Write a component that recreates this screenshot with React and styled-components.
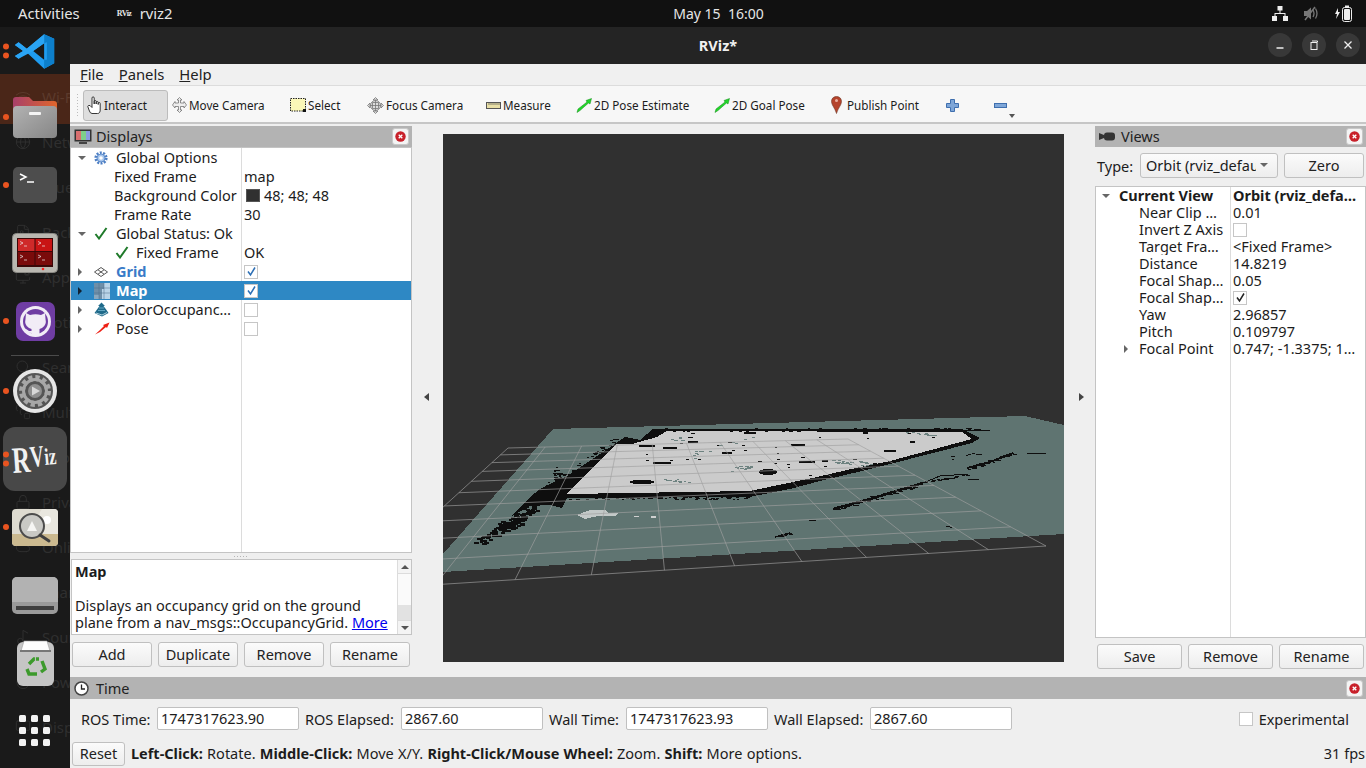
import React from "react";
import styled, { createGlobalStyle } from "styled-components";
import {
  Wifi, Globe, Bluetooth, FileImage, MonitorCog, Bell, Search, SquareStack, LayoutGrid,
  Lock, Cloud, Share2, Music2, Power, Monitor,
} from "lucide-react";

const UI_FONT = '"Noto Sans", "Liberation Sans", sans-serif';

const Global = createGlobalStyle`
  html, body { margin: 0; padding: 0; height: 768px; overflow: hidden; background: #efefef; }
  #root { height: 768px; }
  * { box-sizing: border-box; }
  body { font-family: ${UI_FONT}; font-size: 14.5px; color: #1c1c1c; }
`;

const Screen = styled.div`
  width: 1366px;
  height: 768px;
  display: flex;
  flex-direction: column;
  overflow: hidden;
`;

/* ---------- gnome top bar ---------- */
const TopBar = styled.div`
  height: 27px;
  flex: none;
  background: #111;
  color: #e6e6e6;
  display: grid;
  grid-template-columns: 1fr auto 1fr;
  align-items: center;
  padding: 0 13px 1px 18px;
  font-size: 14.8px;
`;
const TopLeft = styled.div`
  display: flex;
  align-items: center;
`;
const AppName = styled.div`
  display: flex;
  align-items: center;
  margin-left: 37px;
  gap: 8px;
`;
const TinyLogo = styled.span`
  font: bold 8px "Liberation Serif", serif;
  width: 15px;
  letter-spacing: -0.5px;
`;
const Clock = styled.div`
  font-size: 14px;
  margin-left: 66px;
`;
const TopRight = styled.div`
  display: flex;
  justify-content: flex-end;
  align-items: center;
  gap: 15px;
`;

const Body = styled.div`
  flex: 1;
  display: flex;
  min-height: 0;
`;

/* ---------- dock ---------- */
const Dock = styled.div`
  width: 70px;
  flex: none;
  background: #1a1a1a;
  position: relative;
  overflow: hidden;
  display: flex;
  flex-direction: column;
`;
const GhostList = styled.div`
  position: absolute;
  left: 0;
  top: 47px;
  width: 70px;
`;
const GhostRow = styled.div`
  height: ${(p) => (p.$active ? 50 : 45)}px;
  margin-bottom: ${(p) => (p.$active ? -5 : 0)}px;
  padding-bottom: ${(p) => (p.$active ? 5 : 0)}px;
  width: 70px;
  display: flex;
  align-items: center;
  gap: 11px;
  padding-left: 15px;
  white-space: nowrap;
  color: ${(p) => (p.$active ? "#5c3a2c" : "#2f2f2f")};
  background: ${(p) => (p.$active ? "#4a2618" : "transparent")};
  font-size: 15px;
  svg { flex: none; }
`;
const DockSlot = styled.div`
  position: relative;
  height: ${(p) => p.$h || 68}px;
  margin-bottom: ${(p) => p.$mb || 0}px;
  flex: none;
  display: flex;
  align-items: center;
  justify-content: center;
`;
const Highlight = styled.div`
  width: 64px;
  height: 64px;
  border-radius: 12px;
  background: #484848;
  display: flex;
  align-items: center;
  justify-content: center;
`;
const DockSep = styled.div`
  position: relative;
  height: 2px;
  flex: none;
  margin: 0 11px;
  border-top: 1px solid #4b4b4b;
`;
const Pips = styled.div`
  position: absolute;
  left: 3px;
  top: 50%;
  transform: translateY(-50%);
  display: flex;
  flex-direction: column;
  gap: 3px;
`;
const Pip = styled.span`
  width: 6px;
  height: 6px;
  border-radius: 50%;
  background: #e95420;
`;

const VsCodeIcon = () => (
  <svg width="42" height="37" viewBox="0 0 46 40">
    <path d="M33 1 L44 6 V33 L33 39 L14 21 L5 28 L1 25 L10 19.500 L1 13 L5 10 L14 17 Z M33 11 L21 19.500 L33 29 Z" fill="#1f9cf0" fillRule="evenodd" />
    <path d="M33 1 L44 6 V33 L33 39 Z M33 11 V29 L36 29 V10 Z" fill="#0d7fcb" fillRule="evenodd" />
    <path d="M5 10 L14 17 L33 1 V11 L21 19.500 L5 28 L1 25 L10 19.500 L1 13 Z" fill="#2aa4f4" />
  </svg>
);
const FilesIcon = () => (
  <svg width="44" height="41" viewBox="0 0 44 41">
    <defs>
      <linearGradient id="folderTop" x1="0" x2="1" y1="0" y2="0">
        <stop offset="0" stopColor="#a8406a" />
        <stop offset="1" stopColor="#e0662c" />
      </linearGradient>
      <linearGradient id="folderBody" x1="0" x2="1" y1="0" y2="1">
        <stop offset="0" stopColor="#b2b2b2" />
        <stop offset="1" stopColor="#868686" />
      </linearGradient>
    </defs>
    <path d="M0 3 a3 3 0 0 1 3-3 h13 l4 4 h21 a3 3 0 0 1 3 3 v10 H0 Z" fill="url(#folderTop)" />
    <rect y="9" width="44" height="32" rx="4" fill="url(#folderBody)" />
    <rect x="16" y="15" width="12" height="3" rx="1" fill="#f4f4f4" />
  </svg>
);
const TerminalIcon = () => (
  <svg width="44" height="36" viewBox="0 0 44 36">
    <rect width="44" height="36" rx="5" fill="#4d4d4d" />
    <path d="M7 7 L13 10 L7 13" fill="none" stroke="#fff" strokeWidth="1.500" />
    <path d="M14 15 H21" stroke="#fff" strokeWidth="1.500" />
  </svg>
);
const WorkspaceIcon = () => (
  <svg width="46" height="40" viewBox="0 0 46 40">
    <rect x="0.500" y="0.500" width="45" height="39" rx="4" fill="#b9b7b0" stroke="#8b8a85" />
    <rect x="5" y="5" width="36" height="29" fill="#3a0808" />
    <rect x="6" y="6" width="16.500" height="12" fill="#cf2a2a" />
    <rect x="23.500" y="6" width="16.500" height="12" fill="#c81414" />
    <rect x="6" y="19" width="16.500" height="13" fill="#7a0b0b" />
    <rect x="23.500" y="19" width="16.500" height="13" fill="#7a0b0b" />
    <path d="M8 8.500 l3 1.500 l-3 1.500 M12 13 h3 M26 8.500 l3 1.500 l-3 1.500 M30 13 h3 M8 22 l3 1.500 l-3 1.500 M12 27 h3 M26 22 l3 1.500 l-3 1.500 M30 27 h3" stroke="#eee" strokeWidth="0.700" fill="none" />
    <circle cx="31" cy="36" r="1.300" fill="#f22" />
  </svg>
);
const GithubIcon = () => (
  <svg width="39" height="39" viewBox="0 0 39 39">
    <rect width="39" height="39" rx="7" fill="#6f3da3" />
    <circle cx="19.500" cy="19.500" r="15.500" fill="#f1ecf6" />
    <circle cx="19.500" cy="19.500" r="12.500" fill="#6f3da3" />
    <path d="M10 11 L14 13 Q19.500 11.500 25 13 L29 11 L29.500 17 Q31 23 26 26 L23.500 27 V34 H15.500 V31 Q10.500 31 8.500 26.500 Q11 27 13 29 L15.500 29 V27 L13 26 Q8 23 9.500 17 Z" fill="#f1ecf6" />
  </svg>
);
const SettingsIcon = () => (
  <svg width="44" height="44" viewBox="0 0 44 44">
    <circle cx="22" cy="22" r="22" fill="#e6e6e6" />
    <circle cx="22" cy="22" r="18" fill="#555" />
    <circle cx="22" cy="22" r="13" fill="none" stroke="#a7a7a7" strokeWidth="6" strokeDasharray="4 2.800" />
    <circle cx="22" cy="22" r="11.500" fill="none" stroke="#a7a7a7" strokeWidth="3" />
    <circle cx="22" cy="22" r="7" fill="#8f8f8f" />
    <path d="M19 17.500 L27 22 L19 26.500 Z" fill="#d8d8d8" />
  </svg>
);
const RvizIcon = () => (
  <svg width="58" height="48" viewBox="0 0 58 48" fontFamily="Liberation Serif, serif" fontWeight="bold" fill="#f2f2f2">
    <text x="7" y="38" fontSize="37" textLength="18" lengthAdjust="spacingAndGlyphs" transform="rotate(-4 7 38)">R</text>
    <text x="25" y="32" fontSize="30" textLength="14" lengthAdjust="spacingAndGlyphs" transform="rotate(-6 25 32)">V</text>
    <text x="39" y="30" fontSize="24" textLength="12" lengthAdjust="spacingAndGlyphs" transform="rotate(-5 39 30)">iz</text>
  </svg>
);
const MagnifierIcon = () => (
  <svg width="46" height="37" viewBox="0 0 46 37">
    <rect width="46" height="37" rx="4" fill="#dedbd0" />
    <path d="M0 33 Q0 37 4 37 H42 Q46 37 46 33 V25 H0 Z" fill="#cbb98f" />
    <path d="M0 25 L14 25 L30 0 H42 Q46 0 46 4 V25 Z" fill="#e9e7df" />
    <circle cx="35" cy="11" r="4" fill="#fff" />
    <circle cx="20" cy="17" r="12" fill="#c9c9c5" stroke="#4c4c4c" strokeWidth="2" />
    <path d="M15 22 L20 12 L25 22 Z" fill="#f5f5f3" />
    <path d="M28 26 L37 32" stroke="#3f3f3f" strokeWidth="3" strokeLinecap="round" />
  </svg>
);
const DiskIcon = () => (
  <svg width="46" height="37" viewBox="0 0 46 37">
    <rect width="46" height="37" rx="5" fill="#9a9a9a" />
    <path d="M0 5 a5 5 0 0 1 5-5 h36 a5 5 0 0 1 5 5 v20 H0 Z" fill="#b2b2b2" />
    <rect x="4" y="29" width="38" height="4" fill="#3f3f3f" />
  </svg>
);
const TrashIcon = () => (
  <svg width="37" height="46" viewBox="0 0 37 46">
    <rect y="2" width="37" height="44" rx="6" fill="#c5c5c5" />
    <path d="M4 11 L7 1 H30 L33 11 Z" fill="#fdfdfd" stroke="#9a9a9a" strokeWidth="0.600" />
    <rect x="3" y="10" width="31" height="2" fill="#777" />
    <g fill="none" stroke="#3c9a2c" strokeWidth="3.400">
      <path d="M12 24 L17 19 L22 19" strokeDasharray="8 1" />
      <path d="M25 21 L28 29 L24 32" />
      <path d="M20 34 H12 L10 29" />
    </g>
  </svg>
);
const AppGridIcon = () => (
  <svg width="32" height="32" viewBox="0 0 32 32" fill="#f2f2f2">
    {[0, 1, 2].flatMap((r) =>
      [0, 1, 2].map((c) => <rect key={`${r}${c}`} x={c * 12} y={r * 12} width="7" height="7" rx="1.500" />)
    )}
  </svg>
);

const ghosts = [
  ["Wi-Fi", Wifi], ["Network", Globe], ["Bluetooth", Bluetooth], ["Background", FileImage],
  ["Appearance", MonitorCog], ["Notifications", Bell], ["Search", Search], ["Multitasking", SquareStack],
  ["Applications", LayoutGrid], ["Privacy", Lock], ["Online Accounts", Cloud], ["Sharing", Share2],
  ["Sound", Music2], ["Power", Power], ["Displays", Monitor],
];

function Running({ n = 1 }) {
  return (
    <Pips>
      {Array.from({ length: n }, (_, i) => <Pip key={i} />)}
    </Pips>
  );
}

function Launcher() {
  return (
    <Dock>
      <GhostList>
        {ghosts.map(([name, Icon], i) => (
          <GhostRow key={name} $active={i === 0}>
            <Icon size={16} strokeWidth={1.500} />
            {name}
          </GhostRow>
        ))}
      </GhostList>
      <DockSlot $h={48} $mb={8}><Running n={2} /><VsCodeIcon /></DockSlot>
      <DockSlot><Running /><FilesIcon /></DockSlot>
      <DockSlot><Running /><TerminalIcon /></DockSlot>
      <DockSlot><WorkspaceIcon /></DockSlot>
      <DockSlot><Running /><GithubIcon /></DockSlot>
      <DockSep />
      <DockSlot><Running /><SettingsIcon /></DockSlot>
      <DockSlot><Highlight><RvizIcon /></Highlight><Running n={2} /></DockSlot>
      <DockSlot><Running /><MagnifierIcon /></DockSlot>
      <DockSlot><DiskIcon /></DockSlot>
      <DockSlot><TrashIcon /></DockSlot>
      <DockSlot><AppGridIcon /></DockSlot>
    </Dock>
  );
}

/* ---------- window chrome ---------- */
const Win = styled.div`
  flex: 1;
  min-width: 0;
  display: flex;
  flex-direction: column;
  background: #efefef;
`;
const TitleBar = styled.div`
  height: 37px;
  flex: none;
  background: #242424;
  color: #f0f0f0;
  font-weight: 700;
  font-size: 14.5px;
  display: flex;
  align-items: center;
  justify-content: center;
  padding-bottom: 2px;
  position: relative;
`;
const WinButtons = styled.div`
  position: absolute;
  right: 6px;
  top: 6px;
  display: flex;
  gap: 10px;
`;
const WinButton = styled.div`
  width: 24px;
  height: 24px;
  border-radius: 50%;
  background: #383838;
  display: flex;
  align-items: center;
  justify-content: center;
`;
const MenuBar = styled.div`
  height: 22px;
  flex: none;
  background: #f0f0f0;
  border-bottom: 1px solid #dcdcdc;
  display: flex;
  align-items: center;
  padding: 0 0 1px 10px;
  gap: 15px;
  font-size: 14.8px;
  span { color: #222; }
`;
const ToolBar = styled.div`
  height: 38px;
  flex: none;
  background: #f7f7f7;
  border-bottom: 2px solid #c6c6c6;
  display: flex;
  align-items: center;
  padding-top: 2px;
  position: relative;
  font-size: 11.7px;
`;
const Grip = styled.div`
  width: 3px;
  height: 24px;
  margin: 0 4px 0 6px;
  background-image: radial-gradient(#bdbdbd 0.700px, transparent 0.800px);
  background-size: 3px 3px;
`;
const Tool = styled.div`
  width: ${(p) => p.$w}px;
  height: 31px;
  flex: none;
  display: flex;
  align-items: center;
  gap: ${(p) => p.$gap ?? 2}px;
  padding-left: 3px;
  white-space: nowrap;
  border-radius: 3px;
  border: 1px solid ${(p) => (p.$on ? "#bcbcbc" : "transparent")};
  background: ${(p) => (p.$on ? "#dedede" : "transparent")};
  svg { flex: none; }
`;
const MoreArrow = styled.span`
  position: absolute;
  left: 939px;
  top: 28px;
  border-left: 3px solid transparent;
  border-right: 3px solid transparent;
  border-top: 4px solid #555;
`;

const HandIcon = () => (
  <svg width="16" height="19" viewBox="0 0 16 19" fill="#fff" stroke="#222" strokeWidth="0.900">
    <path d="M5 9 V2 a1.100 1.100 0 0 1 2.200 0 V8 V5.500 a1 1 0 0 1 2 0 V8 V6.500 a1 1 0 0 1 2 0 V8.500 V7.500 a1 1 0 0 1 2 0 V13 Q13.500 17.500 10.500 17.500 H5 Q3 17.500 2 14 L0.800 10.500 Q1 9 3 9.500 L5 11.500 Z" />
  </svg>
);
const MoveIcon = () => (
  <svg width="15" height="16" viewBox="0 0 15 16" fill="#eee" stroke="#666" strokeWidth="0.700">
    <path d="M7.500 0.500 L10 3 H8.500 V6 H12 V4.500 L14.500 8 L12 11 V9.500 H8.500 V13 H10 L7.500 15.500 L5 13 H6.500 V9.500 H3 V11 L0.500 8 L3 4.500 V6 H6.500 V3 H5 Z" />
  </svg>
);
const SelectIcon = () => (
  <svg width="16" height="14" viewBox="0 0 16 14">
    <rect x="0.500" y="0.500" width="15" height="12.500" fill="#fbf7b8" stroke="#222" strokeDasharray="1.500 1" />
    <rect x="13" y="11" width="3" height="3" fill="#111" />
  </svg>
);
const FocusIcon = () => (
  <svg width="17" height="17" viewBox="0 0 17 17" fill="none" stroke="#777" strokeWidth="0.800">
    <path d="M8.500 0.500 L11 3 H6 Z M8.500 16.500 L11 14 H6 Z M0.500 8.500 L3 6 V11 Z M16.500 8.500 L14 6 V11 Z" fill="#ddd" />
    <circle cx="8.500" cy="8.500" r="5" fill="#ddd" />
    <path d="M8.500 3 V14 M3 8.500 H14 M5.500 5.500 H11.500 V11.500 H5.500 Z" />
  </svg>
);
const RulerIcon = () => (
  <svg width="15" height="7" viewBox="0 0 15 7">
    <rect x="0.500" y="0.500" width="14" height="6" fill="#e8dfa6" stroke="#555" />
    <path d="M3 1 V3 M5 1 V3 M7 1 V3 M9 1 V3 M11 1 V3 M13 1 V3" stroke="#555" strokeWidth="0.700" />
  </svg>
);
const GreenArrow = () => (
  <svg width="16" height="15" viewBox="0 0 16 15">
    <path d="M1 14.500 L2 11 L11 4 L10 2.500 L15.500 0.500 L14 6 L12.500 5 L4 12.500 Z" fill="#22d62a" stroke="#128a18" strokeWidth="0.500" />
  </svg>
);
const PinIcon = () => (
  <svg width="11" height="18" viewBox="0 0 11 18">
    <path d="M5.500 0.500 C2 0.500 0.500 3 0.500 5.500 C0.500 9 4 12 5.500 17.500 C7 12 10.500 9 10.500 5.500 C10.500 3 9 0.500 5.500 0.500 Z" fill="#b5432c" stroke="#6e3a28" strokeWidth="0.600" />
    <circle cx="5.500" cy="4.500" r="1.500" fill="#e9b0a0" />
  </svg>
);
const PlusIcon = () => (
  <svg width="13" height="13" viewBox="0 0 13 13">
    <path d="M4.500 0.500 H8.500 V4.500 H12.500 V8.500 H8.500 V12.500 H4.500 V8.500 H0.500 V4.500 H4.500 Z" fill="#7ea6d8" stroke="#3f6fae" />
  </svg>
);
const MinusIcon = () => (
  <svg width="13" height="5" viewBox="0 0 13 5">
    <rect x="0.500" y="0.500" width="12" height="4" fill="#7ea6d8" stroke="#3f6fae" />
  </svg>
);

/* ---------- panels ---------- */
const MainRow = styled.div`
  height: 553px;
  flex: none;
  display: flex;
`;
const Side = styled.div`
  width: ${(p) => p.$w}px;
  flex: none;
  display: flex;
  flex-direction: column;
  padding-top: 2px;
`;
const PanelHead = styled.div`
  height: ${(p) => p.$h || 22}px;
  flex: none;
  background: #b3b3b3;
  display: flex;
  align-items: center;
  gap: ${(p) => p.$gap || 5}px;
  padding: 0 3px 0 ${(p) => p.$pl || 3}px;
  font-size: 14.5px;
  color: #222;
`;
const PanelTitle = styled.span`
  margin-top: -2px;
`;
const HeadClose = styled.div`
  margin-left: auto;
  width: 17px;
  height: 17px;
  border-radius: 3px;
  background: #f4f4f4;
  border: 1px solid #c8c8c8;
  display: flex;
  align-items: center;
  justify-content: center;
`;
const CloseDot = () => (
  <HeadClose>
    <svg width="11" height="11" viewBox="0 0 11 11">
      <circle cx="5.500" cy="5.500" r="5.200" fill="#c8202a" />
      <path d="M3.700 3.700 L7.300 7.300 M7.300 3.700 L3.700 7.300" stroke="#fff" strokeWidth="1.300" />
    </svg>
  </HeadClose>
);
const TreeBox = styled.div`
  flex: none;
  height: ${(p) => p.$h}px;
  background: #fff;
  border: 1px solid #c4c4c4;
  background-image: linear-gradient(#dcdcdc, #dcdcdc);
  background-size: 1px 100%;
  background-position: ${(p) => p.$split}px 0;
  background-repeat: no-repeat;
  overflow: hidden;
`;
const Row = styled.div`
  height: ${(p) => p.$h}px;
  display: grid;
  grid-template-columns: ${(p) => p.$split}px 1fr;
  align-items: center;
  white-space: nowrap;
  background: ${(p) => (p.$sel ? "#2e88c4" : "transparent")};
  color: ${(p) => (p.$sel ? "#fff" : "#1c1c1c")};
  font-size: 14.5px;
  line-height: ${(p) => p.$h}px;
`;
const NameCell = styled.div`
  display: flex;
  align-items: center;
  padding-left: ${(p) => p.$pl}px;
  overflow: hidden;
  font-weight: ${(p) => (p.$bold ? 700 : 400)};
  color: ${(p) => p.$color || "inherit"};
`;
const ValueCell = styled.div`
  padding-left: 3px;
  display: flex;
  align-items: center;
  gap: 4px;
  overflow: hidden;
  font-weight: ${(p) => (p.$bold ? 700 : 400)};
`;
const Arrow = styled.span`
  width: 0;
  height: 0;
  flex: none;
  ${(p) =>
    p.$open
      ? `border-left: 4px solid transparent; border-right: 4px solid transparent; border-top: 4px solid #666;`
      : `border-top: 4px solid transparent; border-bottom: 4px solid transparent; border-left: 4px solid ${p.$sel ? "#123" : "#666"};`}
`;
const ArrowSlot = styled.span`
  width: ${(p) => p.$w}px;
  flex: none;
  display: flex;
`;
const IconSlot = styled.span`
  width: ${(p) => p.$w}px;
  flex: none;
  display: flex;
  align-items: center;
`;
const Box = styled.span`
  width: 14px;
  height: 14px;
  flex: none;
  background: #fff;
  border: 1px solid #c6c6c6;
  display: flex;
  align-items: center;
  justify-content: center;
`;
const Swatch = styled.span`
  width: 14px;
  height: 13px;
  margin-left: 2px;
  background: #303030;
  border: 1px solid #555;
`;
const Check = ({ on, color = "#2d6fb5" }) => (
  <Box>
    {on && (
      <svg width="11" height="11" viewBox="0 0 11 11">
        <path d="M2 5.500 L4.500 9 L9 1.500" fill="none" stroke={color} strokeWidth="1.500" />
      </svg>
    )}
  </Box>
);

const GearIcon = () => (
  <svg width="14" height="14" viewBox="0 0 14 14">
    <circle cx="7" cy="7" r="5.300" fill="none" stroke="#4d7fc4" strokeWidth="2.600" strokeDasharray="2 1.300" />
    <circle cx="7" cy="7" r="4" fill="#a8c6ec" stroke="#4d7fc4" strokeWidth="0.800" />
    <circle cx="7" cy="7" r="1.800" fill="#fff" />
  </svg>
);
const TickIcon = () => (
  <svg width="14" height="13" viewBox="0 0 14 13">
    <path d="M1.500 7 L5 11.500 L12.500 1" fill="none" stroke="#1f7a2a" strokeWidth="2" />
  </svg>
);
const GridIcon = () => (
  <svg width="14" height="10" viewBox="0 0 14 10" fill="none" stroke="#444">
    <path d="M7 0.500 L13.500 5 L7 9.500 L0.500 5 Z M4 2.800 L10 7.200 M10 2.800 L4 7.200" strokeWidth="0.900" />
  </svg>
);
const MapIcon = () => (
  <svg width="16" height="16" viewBox="0 0 16 16">
    <rect width="16" height="16" fill="#6f8fa8" />
    <path d="M8 16 V6 H10 V0 H16 V16 Z" fill="#b9d4e8" />
    <path d="M0 12 H5 V16 H0 Z" fill="#8aa8be" />
    <path d="M5 0 V16 M10 0 V16 M0 5 H16 M0 10 H16" stroke="#4f6f88" strokeWidth="0.500" />
  </svg>
);
const ColorMapIcon = () => (
  <svg width="15" height="15" viewBox="0 0 15 15">
    <path d="M7.500 0.500 L11 4 L9.500 4 L12.500 8 L14.500 11 L8 14.500 L0.500 11 L3 7.500 L5.500 4 L4 4 Z" fill="#1f6a8a" />
    <path d="M2 11 L8 13 L13 10.500" fill="none" stroke="#cfe6ef" strokeWidth="0.800" />
    <path d="M5 6 L10 6 M4 8.500 L11 8.500" stroke="#7fc0d8" strokeWidth="0.700" />
  </svg>
);
const PoseIcon = () => (
  <svg width="16" height="13" viewBox="0 0 16 13">
    <path d="M1 12.500 L6 8 L10 4 L9 3 L15.500 0.500 L13 6 L12 5 L6 10 Z" fill="#ee2015" />
  </svg>
);
const DisplayHeadIcon = () => (
  <svg width="18" height="16" viewBox="0 0 18 16">
    <rect x="0.500" y="0.500" width="17" height="12" fill="#333" />
    <rect x="2" y="2" width="5" height="9" fill="#d96f6f" />
    <rect x="7" y="2" width="5" height="9" fill="#7fce8a" />
    <rect x="12" y="2" width="4" height="9" fill="#8a9ae0" />
    <rect x="5" y="13" width="8" height="2" fill="#444" />
  </svg>
);
const CameraHeadIcon = () => (
  <svg width="16" height="9" viewBox="0 0 16 9">
    <path d="M0 1 L5 3 V6 L0 8 Z" fill="#333" />
    <rect x="5" y="0.500" width="11" height="8" rx="3" fill="#333" />
  </svg>
);
const ClockHeadIcon = () => (
  <svg width="15" height="15" viewBox="0 0 15 15">
    <circle cx="7.500" cy="7.500" r="6.500" fill="#fff" stroke="#444" strokeWidth="1.500" />
    <path d="M7.500 3.500 V8 H11" fill="none" stroke="#222" strokeWidth="1.300" />
  </svg>
);

const SplitGrip = styled.div`
  height: ${(p) => p.$h}px;
  flex: none;
  display: flex;
  justify-content: center;
  align-items: center;
  &::after {
    content: "";
    width: 16px;
    height: 3px;
    background-image: radial-gradient(#b5b5b5 0.700px, transparent 0.800px);
    background-size: 3px 3px;
  }
`;
const DescBox = styled.div`
  height: 76px;
  flex: none;
  margin-left: 1px;
  display: flex;
  background: #fff;
  border: 1px solid #c4c4c4;
  overflow: hidden;
`;
const DescText = styled.div`
  flex: 1;
  padding: 3px 0 0 3px;
  font-size: 14.5px;
  line-height: 17px;
  color: #1c1c1c;
  b { display: block; margin-bottom: 17px; }
  a { color: #0000ee; text-decoration: underline; }
`;
const ScrollBar = styled.div`
  width: 14px;
  flex: none;
  border-left: 1px solid #dcdcdc;
  background: #fafafa;
  display: flex;
  flex-direction: column;
  align-items: center;
  justify-content: space-between;
`;
const ScrollEnd = styled.div`
  width: 100%;
  height: 14px;
  display: flex;
  align-items: center;
  justify-content: center;
  background: #f4f4f4;
  border-${(p) => (p.$up ? "bottom" : "top")}: 1px solid #dcdcdc;
  &::after {
    content: "";
    border-left: 4px solid transparent;
    border-right: 4px solid transparent;
    border-${(p) => (p.$up ? "bottom" : "top")}: 4px solid #555;
  }
`;
const ScrollThumb = styled.div`
  width: 100%;
  height: 15px;
  margin-top: auto;
  background: #e2e2e2;
`;
const ButtonRow = styled.div`
  display: grid;
  grid-template-columns: repeat(${(p) => p.$n}, 1fr);
  gap: 6px;
  padding: 0 2px;
  margin-top: ${(p) => p.$mt}px;
`;
const PushButton = styled.div`
  height: ${(p) => p.$h || 25}px;
  width: ${(p) => (p.$w ? `${p.$w}px` : "auto")};
  margin-left: ${(p) => p.$ml || 0}px;
  flex: none;
  display: flex;
  align-items: center;
  justify-content: center;
  padding-bottom: 2px;
  background: linear-gradient(#fbfbfb, #ededed);
  border: 1px solid #c0c0c0;
  border-radius: 3px;
  font-size: 14.5px;
  color: #222;
`;

const Center = styled.div`
  flex: 1;
  display: flex;
  min-width: 0;
`;
const Gutter = styled.div`
  width: 31px;
  flex: none;
  display: flex;
  align-items: center;
  justify-content: ${(p) => (p.$left ? "flex-start" : "flex-end")};
  padding: 0 ${(p) => (p.$left ? 0 : 11)}px 7px ${(p) => (p.$left ? 12 : 0)}px;
  &::after {
    content: "";
    ${(p) =>
      p.$left
        ? "border-top: 4px solid transparent; border-bottom: 4px solid transparent; border-right: 5px solid #444;"
        : "border-top: 4px solid transparent; border-bottom: 4px solid transparent; border-left: 5px solid #444;"}
  }
`;
const Viewport = styled.div`
  width: 621px;
  height: 528px;
  margin-top: 10px;
  flex: none;
  background: #303030;
  svg { display: block; }
`;
const TypeRow = styled.div`
  display: flex;
  align-items: center;
  height: 25px;
  margin: 6px 0 8px;
  padding: 0 2px;
  font-size: 14.5px;
`;
const TypeLabel = styled.span`
  width: 43px;
  flex: none;
`;
const Combo = styled.div`
  width: 138px;
  height: 25px;
  flex: none;
  display: flex;
  align-items: center;
  padding: 0 0 2px 5px;
  gap: 4px;
  background: linear-gradient(#fbfbfb, #ededed);
  border: 1px solid #c0c0c0;
  border-radius: 3px;
  overflow: hidden;
  white-space: nowrap;
`;
const ComboText = styled.span`
  width: 110px;
  overflow: hidden;
  flex: none;
`;
const ComboArrow = styled.span`
  border-left: 4px solid transparent;
  border-right: 4px solid transparent;
  border-top: 4px solid #666;
`;

/* ---------- time panel ---------- */
const TimePanel = styled.div`
  flex: 1;
  display: flex;
  flex-direction: column;
  font-size: 14.5px;
`;
const TimeFields = styled.div`
  display: flex;
  align-items: center;
  height: 23px;
  margin-top: 8px;
  padding: 0 17px 0 11px;
`;
const TimeLabel = styled.span`
  width: ${(p) => p.$w}px;
  flex: none;
  white-space: nowrap;
`;
const TimeInput = styled.div`
  width: 142px;
  height: 23px;
  flex: none;
  margin-right: 6px;
  background: #fff;
  border: 1px solid #c0c0c0;
  border-radius: 2px;
  padding-left: 3px;
  line-height: 21px;
`;
const Experimental = styled.div`
  margin-left: auto;
  display: flex;
  align-items: center;
  gap: 6px;
`;
const StatusRow = styled.div`
  display: flex;
  align-items: center;
  height: 24px;
  margin-top: 12px;
  padding: 0 1px 0 2px;
`;
const Hint = styled.div`
  margin-left: 6px;
  margin-top: -2px;
  white-space: nowrap;
  word-spacing: 0.5px;
`;
const Fps = styled.div`
  margin-left: auto;
  margin-top: -3px;
`;

/* ---------- the 3d view ---------- */
const makeQuad = ([x0, y0], [x1, y1], [x2, y2], [x3, y3]) => {
  const sx = x0 - x1 + x2 - x3;
  const sy = y0 - y1 + y2 - y3;
  const dx1 = x1 - x2, dx2 = x3 - x2, dy1 = y1 - y2, dy2 = y3 - y2;
  const den = dx1 * dy2 - dx2 * dy1;
  const g = (sx * dy2 - dx2 * sy) / den;
  const h = (dx1 * sy - sx * dy1) / den;
  const a = x1 - x0 + g * x1, b = x3 - x0 + h * x3;
  const d = y1 - y0 + g * y1, e = y3 - y0 + h * y3;
  return (u, v) => {
    const w = g * u + h * v + 1;
    return [(a * u + b * v + x0) / w, (d * u + e * v + y0) / w];
  };
};
const gridAt = makeQuad([508, 448], [848, 439], [1046, 546], [352, 590]);
const gridLines = Array.from({ length: 11 }, (_, i) => {
  const t = i / 10;
  return [[gridAt(t, 0), gridAt(t, 1)], [gridAt(0, t), gridAt(1, t)]];
}).flat();

let seed = 7;
const rnd = () => {
  seed = (seed * 16807) % 2147483647;
  return seed / 2147483647;
};
// noisy pixels along a line, the way a lidar map looks
const speckle = (x0, y0, x1, y1, n, spread, size = 2) =>
  Array.from({ length: n }, () => {
    const t = rnd();
    return [
      Math.round(x0 + (x1 - x0) * t + (rnd() - 0.5) * spread),
      Math.round(y0 + (y1 - y0) * t + (rnd() - 0.5) * spread),
      size + Math.round(rnd() * 2),
      size - 1,
    ];
  });

const blackBits = [
  ...speckle(477, 543, 522, 517, 90, 8, 3),
  ...speckle(500, 528, 535, 505, 60, 8, 3),
  ...speckle(553, 470, 560, 480, 22, 8),
  ...speckle(660, 430, 985, 429, 110, 3),
  ...speckle(567, 498, 750, 498, 60, 3),
  ...speckle(540, 490, 615, 440, 50, 5),
  ...speckle(833, 509, 925, 483, 60, 4),
  ...speckle(925, 482, 968, 474, 22, 2),
  ...speckle(967, 469, 1013, 453, 40, 3),
  ...speckle(968, 479, 977, 479, 6, 1),
  ...speckle(775, 537, 790, 533, 10, 2),
  ...speckle(808, 520, 813, 520, 3, 1),
  ...speckle(946, 526, 950, 527, 3, 1),
  ...speckle(950, 457, 985, 452, 8, 4),
  ...speckle(640, 455, 880, 468, 18, 22),
  ...speckle(660, 440, 960, 440, 12, 14),
];
const tealBits = [
  ...speckle(730, 470, 750, 466, 16, 4),
  ...speckle(830, 461, 870, 464, 30, 4),
  ...speckle(650, 480, 700, 482, 10, 4),
  ...speckle(690, 455, 760, 436, 14, 6),
  ...speckle(890, 432, 935, 434, 12, 3),
  ...speckle(668, 440, 680, 438, 8, 3),
];
const blobs = [
  [642, 482, 12, 2.5], [662, 463, 10, 1.5], [670, 448, 7, 1.5], [647, 446, 9, 1], [693, 442, 5, 1.5],
  [727, 453, 6, 1.2], [750, 433, 7, 1.2], [798, 445, 7, 1.5], [807, 462, 9, 1.5], [768, 472, 9, 3],
  [825, 461, 3, 1.2], [890, 451, 6, 1.5], [865, 433, 3, 1], [912, 442, 3, 1],
];
const scanLines = [
  ["833,509 870,499 923,483", 2.5],
  ["923,483 940,476 968,474", 1],
  ["967,468 990,462 1013,453", 2],
  ["1027,453 1046,453", 1],
  ["962,430 990,430", 1],
  ["775,537 790,533", 1.5],
];

function MapScene() {
  return (
    <svg width="621" height="528" viewBox="443 134 621 528" shapeRendering="crispEdges">
      <polygon points="553,429 1025,416 1064,425 1064,534 443,572 443,554" fill="#5f7471" />
      <polygon
        points="653,429 962,429 980,438 972,443 890,464 862,471 820,481 790,489 750,497 567,498 562,508 550,505 530,506 510,517 530,497 540,489 567,476 612,446 625,437 640,440"
        fill="#0e0e0e"
      />
      <polygon
        points="667,431 962,432 972,439 890,461 860,467 817,477 750,491 567,494 582,478 617,444 632,444 657,437"
        fill="#cbcbcb"
      />
      <polygon points="577,515 590,510 605,510 608,513 618,513 616,516 598,516 585,519" fill="#c3c9c8" />
      <rect x="634" y="516" width="5" height="1" fill="#d0d0d0" />
      <rect x="651" y="516" width="5" height="2" fill="#d0d0d0" />
      {blobs.map(([cx, cy, rx, ry]) => (
        <ellipse key={`${cx}${cy}`} cx={cx} cy={cy} rx={rx} ry={ry} fill="#0e0e0e" />
      ))}
      {tealBits.map(([x, y, w, h], i) => (
        <rect key={i} x={x} y={y} width={w} height={h} fill="#6d8280" />
      ))}
      {scanLines.map(([points, width]) => (
        <polyline key={points} points={points} fill="none" stroke="#0e0e0e" strokeWidth={width} />
      ))}
      {blackBits.map(([x, y, w, h], i) => (
        <rect key={i} x={x} y={y} width={w} height={h} fill="#0e0e0e" />
      ))}
      <g shapeRendering="auto">
        {gridLines.map(([a, b], i) => (
          <line key={i} x1={a[0]} y1={a[1]} x2={b[0]} y2={b[1]} stroke="#a0a0a0" strokeOpacity="0.65" strokeWidth="1" />
        ))}
      </g>
    </svg>
  );
}

const displayRows = [
  { name: "Global Options", top: true, open: true, icon: <GearIcon />, slot: 22 },
  { name: "Fixed Frame", pl: 43, value: "map" },
  { name: "Background Color", pl: 43, value: "48; 48; 48", swatch: true },
  { name: "Frame Rate", pl: 43, value: "30" },
  { name: "Global Status: Ok", top: true, open: true, icon: <TickIcon />, slot: 22 },
  { name: "Fixed Frame", pl: 44, icon: <TickIcon />, slot: 21, value: "OK" },
  { name: "Grid", top: true, icon: <GridIcon />, slot: 22, check: true, on: true, bold: true, color: "#3a7bc8" },
  { name: "Map", top: true, icon: <MapIcon />, slot: 22, check: true, on: true, bold: true, sel: true },
  { name: "ColorOccupanc…", top: true, icon: <ColorMapIcon />, slot: 22, check: true },
  { name: "Pose", top: true, icon: <PoseIcon />, slot: 22, check: true },
];

const viewRows = [
  { name: "Current View", pl: 6, open: true, bold: true, value: "Orbit (rviz_defa…", vbold: true },
  { name: "Near Clip …", pl: 43, value: "0.01" },
  { name: "Invert Z Axis", pl: 43, check: true },
  { name: "Target Fra…", pl: 43, value: "<Fixed Frame>" },
  { name: "Distance", pl: 43, value: "14.8219" },
  { name: "Focal Shap…", pl: 43, value: "0.05" },
  { name: "Focal Shap…", pl: 43, check: true, on: true, checkColor: "#222" },
  { name: "Yaw", pl: 43, value: "2.96857" },
  { name: "Pitch", pl: 43, value: "0.109797" },
  { name: "Focal Point", pl: 28, value: "0.747; -1.3375; 1…", arrow: true },
];

function DisplayRow({ r }) {
  return (
    <Row $h={19} $split={170} $sel={r.sel}>
      <NameCell $pl={r.top ? 7 : r.pl} $bold={r.bold} $color={r.sel ? "#fff" : r.color}>
        {r.top && (
          <ArrowSlot $w={16}>
            <Arrow $open={r.open} $sel={r.sel} />
          </ArrowSlot>
        )}
        {r.icon && <IconSlot $w={r.slot}>{r.icon}</IconSlot>}
        {r.name}
      </NameCell>
      <ValueCell>
        {r.swatch && <Swatch />}
        {r.check ? <Check on={r.on} /> : r.value}
      </ValueCell>
    </Row>
  );
}

function ViewRow({ r }) {
  return (
    <Row $h={17} $split={134}>
      <NameCell $pl={r.pl} $bold={r.bold}>
        {r.open && <ArrowSlot $w={17}><Arrow $open /></ArrowSlot>}
        {r.arrow && <ArrowSlot $w={15}><Arrow /></ArrowSlot>}
        {r.name}
      </NameCell>
      <ValueCell $bold={r.vbold}>
        {r.check ? <Check on={r.on} color={r.checkColor} /> : r.value}
      </ValueCell>
    </Row>
  );
}

export default function App() {
  return (
    <Screen>
      <Global />
      <TopBar>
        <TopLeft>
          Activities
          <AppName><TinyLogo>RViz</TinyLogo>rviz2</AppName>
        </TopLeft>
        <Clock>May 15&nbsp; 16:00</Clock>
        <TopRight>
          <svg width="16" height="15" viewBox="0 0 16 15" fill="#eee">
            <rect x="5.500" y="0" width="5" height="4.500" />
            <rect x="0" y="10" width="5" height="5" />
            <rect x="11" y="10" width="5" height="5" />
            <path d="M7.500 4 H8.500 V7 H13.500 V10 H12.500 V8 H3.500 V10 H2.500 V7 H7.500 Z" />
          </svg>
          <svg width="16" height="15" viewBox="0 0 16 15" fill="none" stroke="#777">
            <path d="M1 5 H4 L8 1.500 V13.500 L4 10 H1 Z" fill="#777" stroke="none" />
            <path d="M10 4 Q12 7.500 10 11 M12.500 2.500 Q15.500 7.500 12.500 12.500" strokeWidth="1.300" />
            <path d="M2 14 L12 1" strokeWidth="1.500" />
          </svg>
          <svg width="19" height="17" viewBox="0 0 19 17">
            <path d="M4 3 L1 9 H3 L2 14 L6 7 H4 Z" fill="#eee" />
            <rect x="8.500" y="2.500" width="9" height="14" rx="2" fill="none" stroke="#eee" />
            <rect x="11" y="0.500" width="4" height="2" fill="#eee" />
            <rect x="10" y="4" width="6" height="11" rx="1" fill="#eee" />
          </svg>
        </TopRight>
      </TopBar>
      <Body>
        <Launcher />
        <Win>
          <TitleBar>
            RViz*
            <WinButtons>
              <WinButton>
                <svg width="10" height="10" viewBox="0 0 10 10"><path d="M1.500 8 H8.500" stroke="#eee" strokeWidth="1.500" /></svg>
              </WinButton>
              <WinButton>
                <svg width="10" height="10" viewBox="0 0 10 10" fill="none" stroke="#eee"><rect x="2" y="2.500" width="6" height="7" /><path d="M3 1 H8.500 V2" /></svg>
              </WinButton>
              <WinButton>
                <svg width="10" height="10" viewBox="0 0 10 10"><path d="M1.500 1.500 L8.500 8.500 M8.500 1.500 L1.500 8.500" stroke="#eee" strokeWidth="1.300" /></svg>
              </WinButton>
            </WinButtons>
          </TitleBar>
          <MenuBar>
            <span><u>F</u>ile</span>
            <span><u>P</u>anels</span>
            <span><u>H</u>elp</span>
          </MenuBar>
          <ToolBar>
            <Grip />
            <Tool $w={85} $on $gap={1}><HandIcon />Interact</Tool>
            <Tool $w={118}><MoveIcon />Move Camera</Tool>
            <Tool $w={77}><SelectIcon />Select</Tool>
            <Tool $w={119}><FocusIcon />Focus Camera</Tool>
            <Tool $w={90}><RulerIcon />Measure</Tool>
            <Tool $w={138}><GreenArrow />2D Pose Estimate</Tool>
            <Tool $w={117}><GreenArrow />2D Goal Pose</Tool>
            <Tool $w={115} $gap={5}><PinIcon />Publish Point</Tool>
            <Tool $w={48}><PlusIcon /></Tool>
            <Tool $w={30}><MinusIcon /></Tool>
            <MoreArrow />
          </ToolBar>
          <MainRow>
            <Side $w={342}>
              <PanelHead $h={21} $pl={4} $gap={4}><DisplayHeadIcon /><PanelTitle>Displays</PanelTitle><CloseDot /></PanelHead>
              <TreeBox $split={170} $h={406}>
                {displayRows.map((r, i) => <DisplayRow key={i} r={r} />)}
              </TreeBox>
              <SplitGrip $h={6} />
              <DescBox>
                <DescText>
                  <b>Map</b>
                  Displays an occupancy grid on the ground plane from a nav_msgs::OccupancyGrid. <a>More information</a>.
                </DescText>
                <ScrollBar>
                  <ScrollEnd $up />
                  <ScrollThumb />
                  <ScrollEnd />
                </ScrollBar>
              </DescBox>
              <ButtonRow $n={4} $mt={7}>
                <PushButton>Add</PushButton>
                <PushButton>Duplicate</PushButton>
                <PushButton>Remove</PushButton>
                <PushButton>Rename</PushButton>
              </ButtonRow>
            </Side>
            <Center>
              <Gutter $left />
              <Viewport><MapScene /></Viewport>
              <Gutter />
            </Center>
            <Side $w={271}>
              <PanelHead $h={21} $pl={4} $gap={6}><CameraHeadIcon /><PanelTitle>Views</PanelTitle><CloseDot /></PanelHead>
              <TypeRow>
                <TypeLabel>Type:</TypeLabel>
                <Combo><ComboText>Orbit (rviz_default)</ComboText><ComboArrow /></Combo>
                <PushButton $w={80} $ml={6}>Zero</PushButton>
              </TypeRow>
              <TreeBox $split={134} $h={452}>
                {viewRows.map((r, i) => <ViewRow key={i} r={r} />)}
              </TreeBox>
              <ButtonRow $n={3} $mt={6}>
                <PushButton>Save</PushButton>
                <PushButton>Remove</PushButton>
                <PushButton>Rename</PushButton>
              </ButtonRow>
            </Side>
          </MainRow>
          <TimePanel>
            <PanelHead $pl={4} $gap={7}><ClockHeadIcon />Time<CloseDot /></PanelHead>
            <TimeFields>
              <TimeLabel $w={76}>ROS Time:</TimeLabel>
              <TimeInput>1747317623.90</TimeInput>
              <TimeLabel $w={96}>ROS Elapsed:</TimeLabel>
              <TimeInput>2867.60</TimeInput>
              <TimeLabel $w={77}>Wall Time:</TimeLabel>
              <TimeInput>1747317623.93</TimeInput>
              <TimeLabel $w={96}>Wall Elapsed:</TimeLabel>
              <TimeInput>2867.60</TimeInput>
              <Experimental><Check />Experimental</Experimental>
            </TimeFields>
            <StatusRow>
              <PushButton $w={53} $h={24}>Reset</PushButton>
              <Hint>
                <b>Left-Click:</b> Rotate. <b>Middle-Click:</b> Move X/Y. <b>Right-Click/Mouse Wheel:</b> Zoom. <b>Shift:</b> More options.
              </Hint>
              <Fps>31 fps</Fps>
            </StatusRow>
          </TimePanel>
        </Win>
      </Body>
    </Screen>
  );
}
